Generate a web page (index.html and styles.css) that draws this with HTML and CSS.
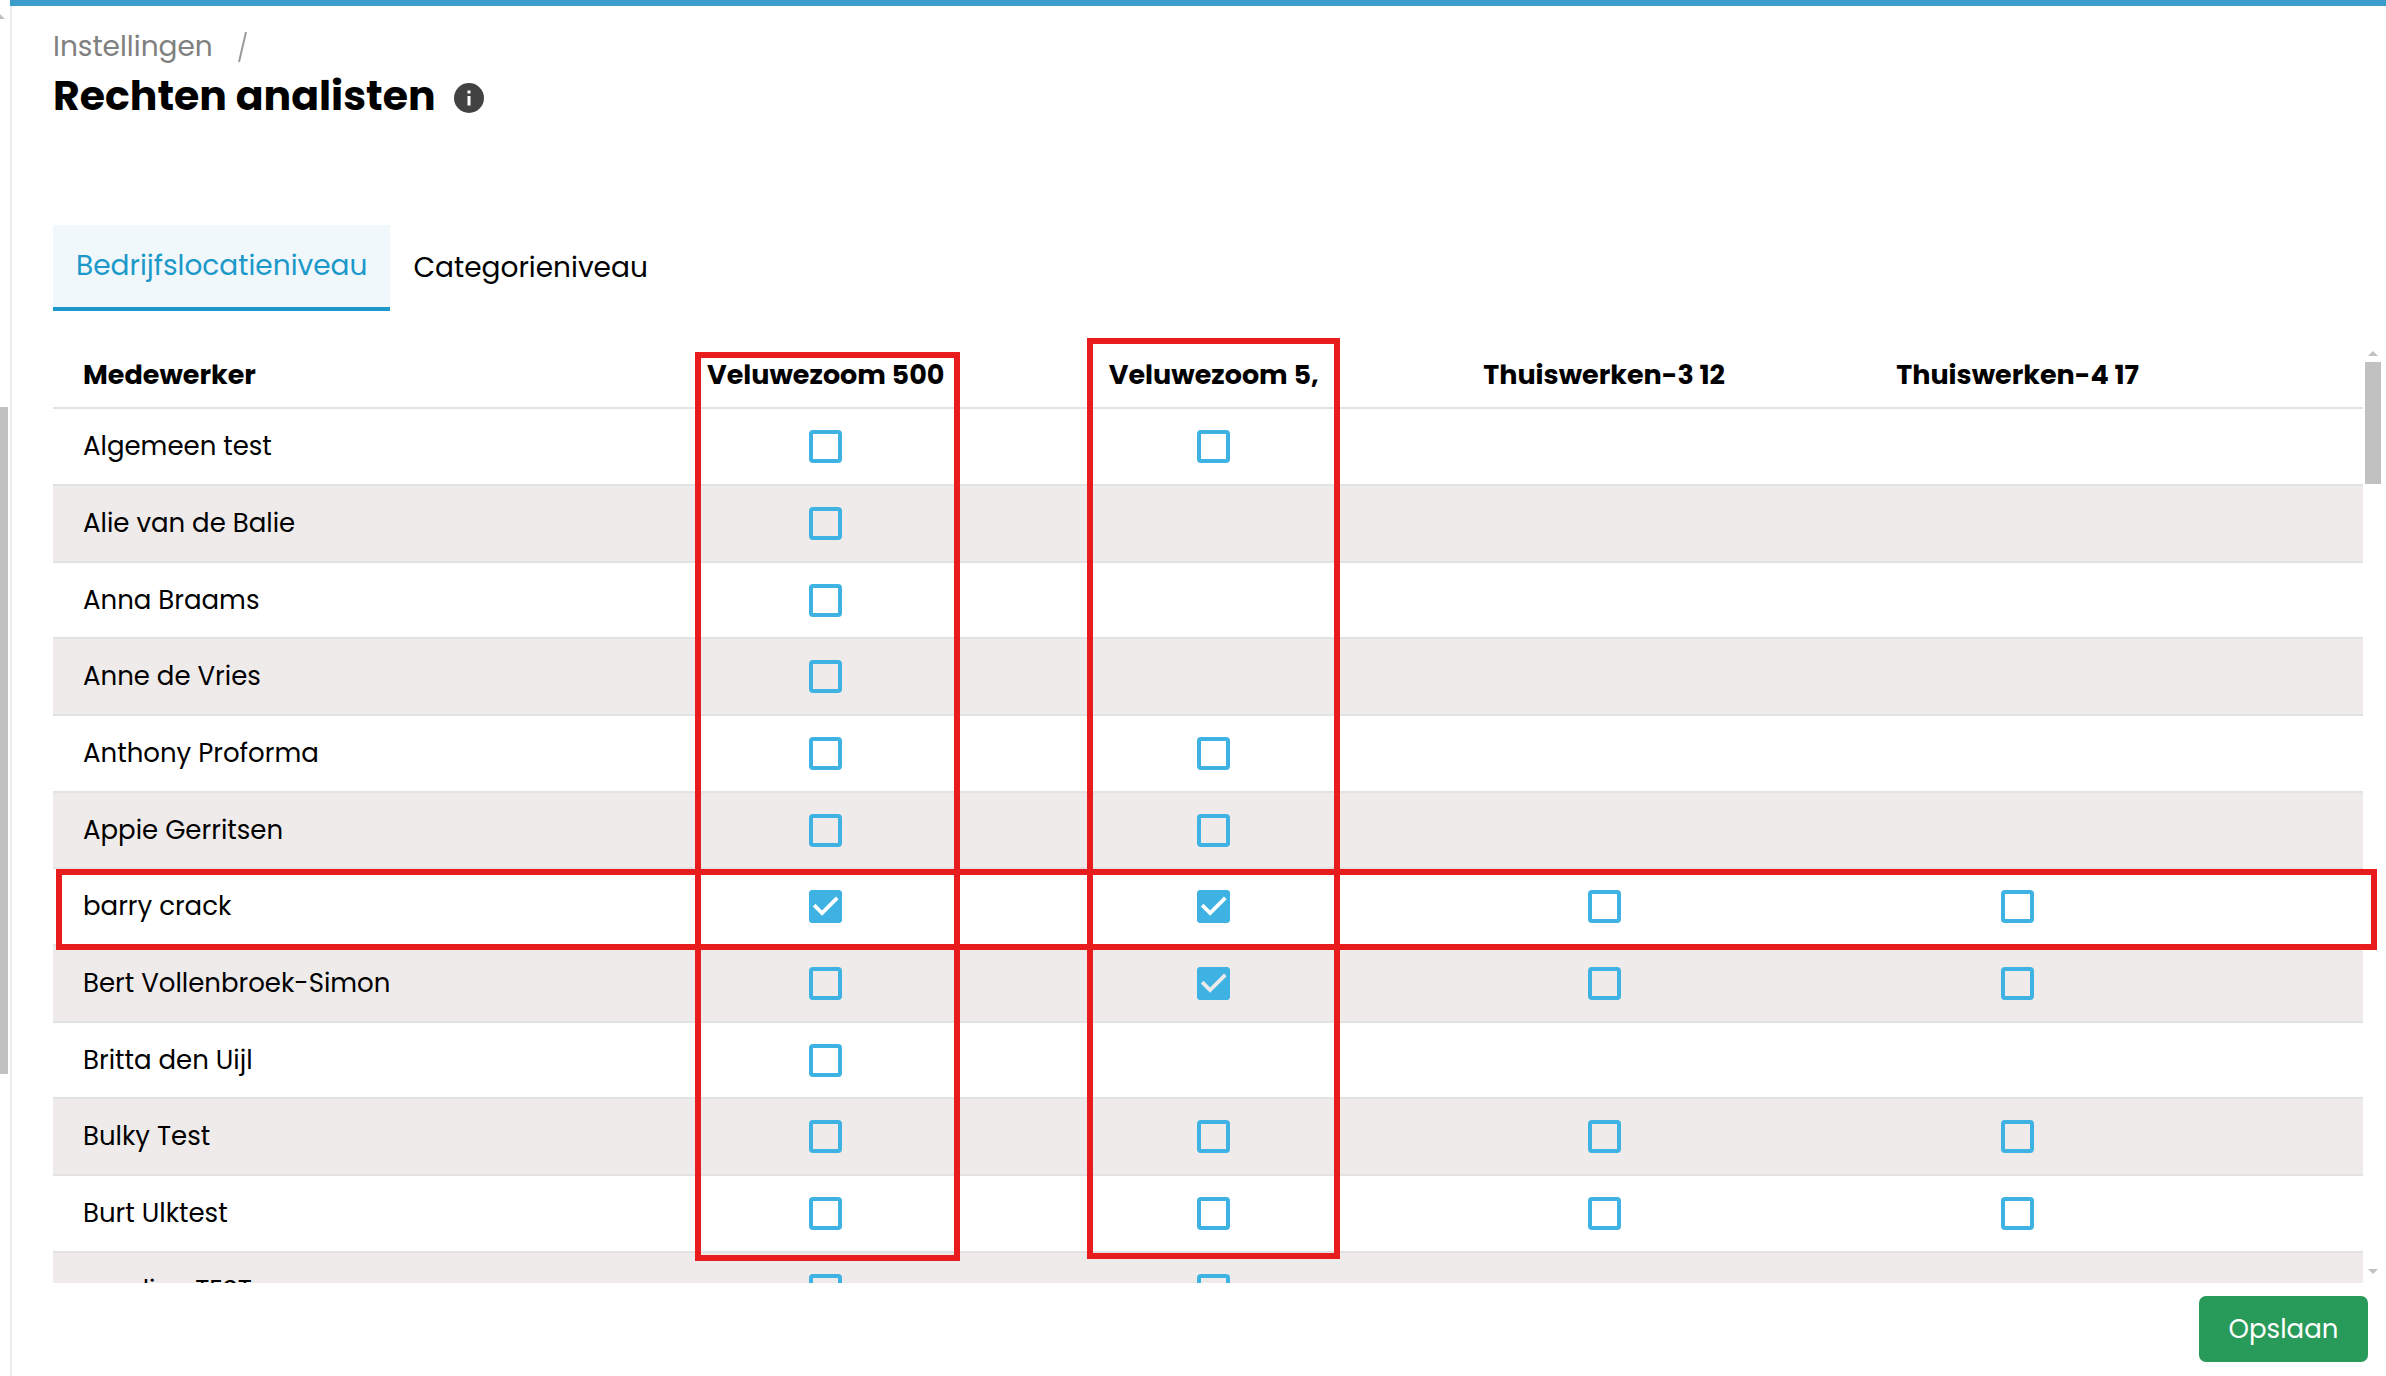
FILE: index.html
```html
<!DOCTYPE html>
<html lang="nl">
<head>
<meta charset="UTF-8" />
<meta name="viewport" content="width=device-width, initial-scale=1" />
<title>Rechten analisten</title>
<link rel="stylesheet" href="styles.css">
</head>
<body>

<!-- Scrollbar of the side menu -->
<div class="side-scroll" aria-hidden="true">
  <span class="side-arrow"></span>
  <span class="side-thumb"></span>
</div>

<main class="page">
  <nav class="breadcrumb" aria-label="Kruimelpad">
    <a href="#">Instellingen</a>
    <svg width="10" height="32" viewBox="0 0 10 32" aria-hidden="true"><path d="M9 1L2 31" stroke="#9b9b9b" stroke-width="2" fill="none"/></svg>
  </nav>

  <header class="title-row">
    <h1>Rechten analisten</h1>
    <button class="info-btn" type="button" aria-label="Informatie">
      <svg width="30" height="30" viewBox="0 0 30 30"><circle cx="15" cy="15" r="15" fill="#424242"/><path d="M13.5 7.500h3v3h-3zM13.5 13h3v9.500h-3z" fill="#fff"/></svg>
    </button>
  </header>

  <div class="tabs" role="tablist">
    <button class="tab active" type="button" role="tab" aria-selected="true">Bedrijfslocatieniveau</button>
    <button class="tab" type="button" role="tab" aria-selected="false">Categorieniveau</button>
  </div>

  <section class="table-area">
    <div class="table-wrap">
      <table class="rights">
        <colgroup>
          <col class="col-name"><col class="col-a"><col class="col-b"><col class="col-c"><col class="col-d"><col>
        </colgroup>
        <thead>
          <tr>
            <th class="name" scope="col">Medewerker</th>
            <th scope="col">Veluwezoom 500</th>
            <th scope="col">Veluwezoom 5,</th>
            <th scope="col">Thuiswerken-3 12</th>
            <th scope="col">Thuiswerken-4 17</th>
            <td></td>
          </tr>
        </thead>
        <tbody id="rights-body"></tbody>
      </table>
    </div>
    <div class="scrollbar" aria-hidden="true">
      <span class="arrow-up"></span>
      <span class="thumb"></span>
      <span class="arrow-down"></span>
    </div>

    <!-- Highlight frames -->
    <div class="frame frame-500"></div>
    <div class="frame frame-5"></div>
    <div class="frame frame-row"></div>
  </section>

  <footer class="actions">
    <button class="save-btn" type="button">Opslaan</button>
  </footer>
</main>

<script src="script.js"></script>
</body>
</html>
```
FILE: styles.css
```css
* {
  box-sizing: border-box;
}

body {
  margin: 0;
  height: 100vh;
  display: flex;
  overflow: hidden;
  font-family: Poppins, Inter, sans-serif;
  font-size: 26px;
  color: #000;
  background: #fff;
}

button {
  font-family: inherit;
  border: none;
  cursor: pointer;
}

/* Side menu scrollbar */
.side-scroll {
  flex: none;
  width: 10px;
  display: flex;
  flex-direction: column;
  overflow: hidden;
}

.side-arrow {
  flex: none;
  width: 10px;
  height: 5px;
  margin-top: 14px;
  margin-left: -5px;
  background: #c1c1c1;
  clip-path: polygon(50% 0, 100% 100%, 0 100%);
}

.side-thumb {
  flex: none;
  width: 8px;
  height: 667px;
  margin-top: 388px;
  background: #c1c1c1;
}

.page {
  flex: 1;
  min-width: 0;
  display: flex;
  flex-direction: column;
  border-top: 6px solid #3b9dcc;
  padding: 24px 4px 14px 43px;
  box-shadow: inset 2px 0 1px #ebebeb;
}

/* Heading */
.breadcrumb {
  display: flex;
  align-items: center;
  gap: 24px;
  height: 34px;
  font-size: 28px;
}

.breadcrumb a {
  color: #808080;
  text-decoration: none;
}

.title-row {
  display: flex;
  align-items: center;
  gap: 18px;
  height: 64px;
}

h1 {
  margin: 0;
  font-size: 41px;
  line-height: 64px;
  font-weight: 700;
}

.info-btn {
  display: flex;
  margin-top: 4px;
  padding: 0;
  background: none;
}

/* Tabs */
.tabs {
  display: flex;
  height: 86px;
  margin-top: 97px;
}

.tab {
  padding: 0 23px;
  font-size: 28px;
  color: #000;
  background: none;
}

.tab.active {
  color: #1c98c9;
  background: #f0f8fc;
  border-bottom: 4px solid #1c98c9;
}

/* Table */
.table-area {
  position: relative;
  flex: 1;
  min-height: 0;
  display: flex;
  margin-top: 29px;
}

.table-wrap {
  flex: 1;
  min-width: 0;
  overflow: hidden;
}

.rights {
  width: 100%;
  table-layout: fixed;
  border-collapse: collapse;
}

.col-name { width: 25%; }
.col-a { width: 16.9%; }
.col-b { width: 16.7%; }
.col-c { width: 17.1%; }
.col-d { width: 18.7%; }

.rights th,
.rights td {
  padding: 0;
  text-align: center;
  vertical-align: middle;
  border-bottom: 2px solid #e2e2e2;
}

.rights thead tr {
  height: 68px;
}

.rights thead th {
  padding-top: 2px;
  font-size: 27px;
  font-weight: 700;
  white-space: nowrap;
}

.rights .name {
  padding-left: 30px;
  text-align: left;
}

.rights tbody th {
  font-weight: 400;
}

.rights tbody tr {
  height: 77px;
}

.rights tbody tr:nth-child(3n) {
  height: 76px;
}

.rights tbody tr:nth-child(even) {
  background: #efebea;
}

.check {
  appearance: none;
  display: block;
  width: 33px;
  height: 33px;
  margin: 0 auto;
  border-radius: 4px;
  box-shadow: inset 0 0 0 4px #3eb3e3;
}

.check:checked {
  background: #3eb3e3;
}

.check:checked::after {
  content: "";
  display: block;
  height: 100%;
  background: #fff;
  clip-path: polygon(39% 78%, 11% 50%, 19% 42%, 39% 62%, 81% 20%, 89% 28%);
}

tr:nth-child(even) .check:checked::after {
  background: #efebea;
}

/* Table scrollbar */
.scrollbar {
  flex: none;
  width: 19px;
  padding: 11px 1px 9px 2px;
  display: flex;
  flex-direction: column;
  align-items: center;
}

.arrow-up,
.arrow-down {
  width: 10px;
  height: 5px;
  background: #c1c1c1;
}

.arrow-up {
  clip-path: polygon(50% 0, 100% 100%, 0 100%);
}

.arrow-down {
  margin-top: auto;
  clip-path: polygon(0 0, 100% 0, 50% 100%);
}

.thumb {
  width: 16px;
  height: 122px;
  margin-top: 6px;
  background: #c1c1c1;
}

/* Highlight frames over the table */
.frame {
  position: absolute;
  border: 6px solid #e81c1c;
  pointer-events: none;
}

.frame-500 {
  top: 12px;
  bottom: 22px;
  left: 27.57%;
  width: 11.38%;
}

.frame-5 {
  top: -2px;
  bottom: 24px;
  left: 44.4%;
  width: 10.86%;
}

.frame-row {
  top: 529px;
  height: 81px;
  left: 3px;
  right: 5px;
}

/* Actions */
.actions {
  display: flex;
  justify-content: flex-end;
  padding: 13px 14px 0 0;
}

.save-btn {
  width: 169px;
  height: 66px;
  border-radius: 7px;
  font-size: 26px;
  color: #fff;
  background: #289a59;
}
```
FILE: script.js
```javascript
const locations = ['Veluwezoom 500', 'Veluwezoom 5,', 'Thuiswerken-3 12', 'Thuiswerken-4 17'];

// 1 = checked, 0 = unchecked, missing = no checkbox
const employees = [
  ['Algemeen test', [0, 0]],
  ['Alie van de Balie', [0]],
  ['Anna Braams', [0]],
  ['Anne de Vries', [0]],
  ['Anthony Proforma', [0, 0]],
  ['Appie Gerritsen', [0, 0]],
  ['barry crack', [1, 1, 0, 0]],
  ['Bert Vollenbroek-Simon', [0, 1, 0, 0]],
  ['Britta den Uijl', [0]],
  ['Bulky Test', [0, 0, 0, 0]],
  ['Burt Ulktest', [0, 0, 0, 0]],
  ['caroline TEST', [0, 0]]
];

const body = document.getElementById('rights-body');

employees.forEach(([name, rights]) => {
  const row = body.insertRow();
  const head = document.createElement('th');
  head.className = 'name';
  head.scope = 'row';
  head.textContent = name;
  row.appendChild(head);

  locations.forEach((location, i) => {
    const cell = row.insertCell();
    if (rights[i] === undefined) return;
    const box = document.createElement('input');
    box.type = 'checkbox';
    box.className = 'check';
    box.checked = rights[i] === 1;
    box.setAttribute('aria-label', name + ', ' + location);
    cell.appendChild(box);
  });
  row.insertCell();
});
```
